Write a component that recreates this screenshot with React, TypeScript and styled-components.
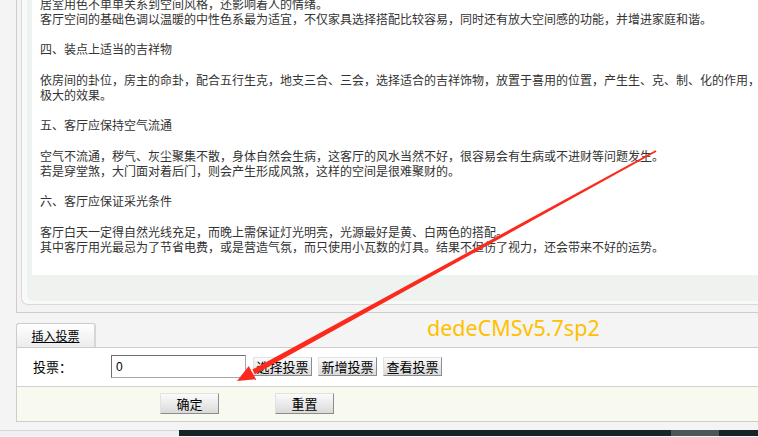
import React from "react";
import styled, { createGlobalStyle } from "styled-components";

const GlobalStyle = createGlobalStyle`
  html, body {
    margin: 0;
    padding: 0;
    overflow: hidden;
    background: #f4f4f4;
  }
  body {
    width: 758px;
    height: 437px;
    font-family: "Noto Sans CJK SC", "Noto Sans", sans-serif;
  }
`;

const Page = styled.div`
  position: relative;
  width: 758px;
  height: 437px;
  overflow: hidden;
  display: flex;
  flex-direction: column;
  background: #f4f4f4;
`;

const ArticleFrame = styled.div`
  margin: -4.4px 0 0 16px;
  width: 900px;
  flex-shrink: 0;
  border-left: 1px solid #cdcdcd;
  border-bottom: 1px solid #cdcdcd;
  padding: 0 0 7px 4px;
  background: #f3f3f3;
`;

const ArticleInner = styled.div`
  border-left: 1px solid #d9d9d9;
  border-bottom: 1px solid #d9d9d9;
  border-bottom-left-radius: 7px;
  padding: 0 0 3px 5px;
  background: #f9f9f9;
`;

const ArticleWell = styled.div`
  background: #eef3ef;
  border-bottom-left-radius: 6px;
  padding: 0 0 26px 5px;
`;

const ArticleBody = styled.div`
  background: #ffffff;
  padding: 0 0 21px 8px;
  font-size: 12px;
  line-height: 15.2px;
  color: #333333;
  white-space: nowrap;
`;

const Para = styled.p`
  margin: 0 0 15.2px;
  &:last-child {
    margin-bottom: 0;
  }
`;

const TabBar = styled.div`
  height: 34px;
  flex-shrink: 0;
  margin-left: 16px;
  display: flex;
  align-items: flex-end;
`;

const Tab = styled.div`
  box-sizing: border-box;
  width: 80px;
  height: 24px;
  border: 1px solid #cccccc;
  border-right: 2px solid #d6d6d6;
  border-bottom: none;
  border-radius: 3px 3px 0 0;
  background: linear-gradient(#ffffff, #ececec);
  display: flex;
  align-items: center;
  justify-content: center;
  font-size: 12px;
  color: #000;
  text-decoration: underline;
`;

const Watermark = styled.div`
  align-self: flex-start;
  margin: 2px 0 0 331px;
  font-family: "Noto Sans", "Open Sans", sans-serif;
  font-size: 21.5px;
  line-height: 26px;
  color: #ffc000;
  white-space: nowrap;
`;

const FormPanel = styled.div`
  margin-left: 16px;
  width: 900px;
  flex-shrink: 0;
  border-left: 1px solid #cccccc;
  border-top: 1px solid #cccccc;
  border-bottom: 1px solid #cccccc;
`;

const FieldRow = styled.div`
  height: 38px;
  background: #ffffff;
  display: flex;
  align-items: center;
  padding-left: 16px;
  font-size: 12px;
  color: #000;
`;

const Label = styled.span`
  width: 78px;
  font-size: 13px;
`;

const TextInput = styled.input`
  box-sizing: border-box;
  width: 135px;
  height: 23px;
  margin: 0 7px 0 0;
  padding: 0 4px;
  border: 1px solid #a8a8a8;
  border-top-color: #6f6f6f;
  border-left-color: #6f6f6f;
  font-family: "Liberation Sans", sans-serif;
  font-size: 12px;
  color: #000;
  outline: none;
`;

const ButtonGroup = styled.div`
  display: flex;
  gap: 6px;
`;

const Btn = styled.button<{ $tall?: boolean }>`
  box-sizing: border-box;
  width: 59px;
  height: ${(p) => (p.$tall ? "21px" : "19px")};
  padding: 0;
  border: 1px solid;
  border-color: #e2e2e2 #8c8c8c #8c8c8c #e2e2e2;
  background: linear-gradient(#fbfbfb, #dadada);
  font-family: "Noto Sans CJK SC", sans-serif;
  font-size: 13px;
  line-height: 1;
  color: #000;
`;

const ActionRow = styled.div`
  height: 35px;
  box-sizing: border-box;
  border-top: 1px solid #d0d0d0;
  background: #f9faef;
  display: flex;
  align-items: flex-start;
  padding: 6px 0 0 143px;
  gap: 56px;
`;

const Footer = styled.div`
  margin-top: 8px;
  height: 6px;
  flex-shrink: 0;
  display: flex;
`;

const FooterLight = styled.div`
  width: 179px;
  box-sizing: border-box;
  border-top: 1px solid #d8d8d8;
  background: #efefef;
`;

const FooterDark = styled.div`
  flex: 1;
  background: #162626;
  padding-left: 492px;
  display: flex;
`;

const FooterSegment = styled.div`
  width: 48px;
  background: #4b5656;
`;

const ArrowLayer = styled.svg`
  position: absolute;
  left: 0;
  top: 0;
  width: 758px;
  height: 437px;
  pointer-events: none;
`;

const lines: string[][] = [
  [
    "居室用色不单单关系到空间风格，还影响着人的情绪。",
    "客厅空间的基础色调以温暖的中性色系最为适宜，不仅家具选择搭配比较容易，同时还有放大空间感的功能，并增进家庭和谐。",
  ],
  ["四、装点上适当的吉祥物"],
  [
    "依房间的卦位，房主的命卦，配合五行生克，地支三合、三会，选择适合的吉祥饰物，放置于喜用的位置，产生生、克、制、化的作用，达到",
    "极大的效果。",
  ],
  ["五、客厅应保持空气流通"],
  [
    "空气不流通，秽气、灰尘聚集不散，身体自然会生病，这客厅的风水当然不好，很容易会有生病或不进财等问题发生。",
    "若是穿堂煞，大门面对着后门，则会产生形成风煞，这样的空间是很难聚财的。",
  ],
  ["六、客厅应保证采光条件"],
  [
    "客厅白天一定得自然光线充足，而晚上需保证灯光明亮，光源最好是黄、白两色的搭配。",
    "其中客厅用光最忌为了节省电费，或是营造气氛，而只使用小瓦数的灯具。结果不但伤了视力，还会带来不好的运势。",
  ],
];

function Arrow() {
  const sx = 656, sy = 151;
  const tx = 237, ty = 381;
  const dx = tx - sx, dy = ty - sy;
  const len = Math.hypot(dx, dy);
  const ux = dx / len, uy = dy / len;
  const nx = -uy, ny = ux;
  const headLen = 19;
  const headHalf = 7.5;
  const bx = tx - ux * headLen, by = ty - uy * headLen;
  const s0 = 0.9, s1 = 2.6;
  const fmt = (pts: number[][]) =>
    pts.map((p) => p.map((v) => v.toFixed(2)).join(",")).join(" ");
  const shaft = fmt([
    [sx + nx * s0, sy + ny * s0],
    [bx + nx * s1, by + ny * s1],
    [bx - nx * s1, by - ny * s1],
    [sx - nx * s0, sy - ny * s0],
  ]);
  const head = fmt([
    [tx, ty],
    [bx + nx * headHalf + ux * 1.5, by + ny * headHalf + uy * 1.5],
    [bx - nx * headHalf + ux * 1.5, by - ny * headHalf + uy * 1.5],
  ]);
  return (
    <ArrowLayer viewBox="0 0 758 437">
      <polygon points={shaft} fill="#fb2a1c" />
      <polygon points={head} fill="#fb2a1c" />
    </ArrowLayer>
  );
}

export default function App() {
  return (
    <>
      <GlobalStyle />
      <Page>
        <ArticleFrame>
          <ArticleInner>
            <ArticleWell>
              <ArticleBody>
                {lines.map((para, i) => (
                  <Para key={i}>
                    {para.map((l, j) => (
                      <React.Fragment key={j}>
                        {j > 0 && <br />}
                        {l}
                      </React.Fragment>
                    ))}
                  </Para>
                ))}
              </ArticleBody>
            </ArticleWell>
          </ArticleInner>
        </ArticleFrame>

        <TabBar>
          <Tab>插入投票</Tab>
          <Watermark>dedeCMSv5.7sp2</Watermark>
        </TabBar>

        <FormPanel>
          <FieldRow>
            <Label>投票：</Label>
            <TextInput defaultValue="0" />
            <ButtonGroup>
              <Btn>选择投票</Btn>
              <Btn>新增投票</Btn>
              <Btn>查看投票</Btn>
            </ButtonGroup>
          </FieldRow>
          <ActionRow>
            <Btn $tall>确定</Btn>
            <Btn $tall>重置</Btn>
          </ActionRow>
        </FormPanel>

        <Footer>
          <FooterLight />
          <FooterDark>
            <FooterSegment />
          </FooterDark>
        </Footer>

        <Arrow />
      </Page>
    </>
  );
}
